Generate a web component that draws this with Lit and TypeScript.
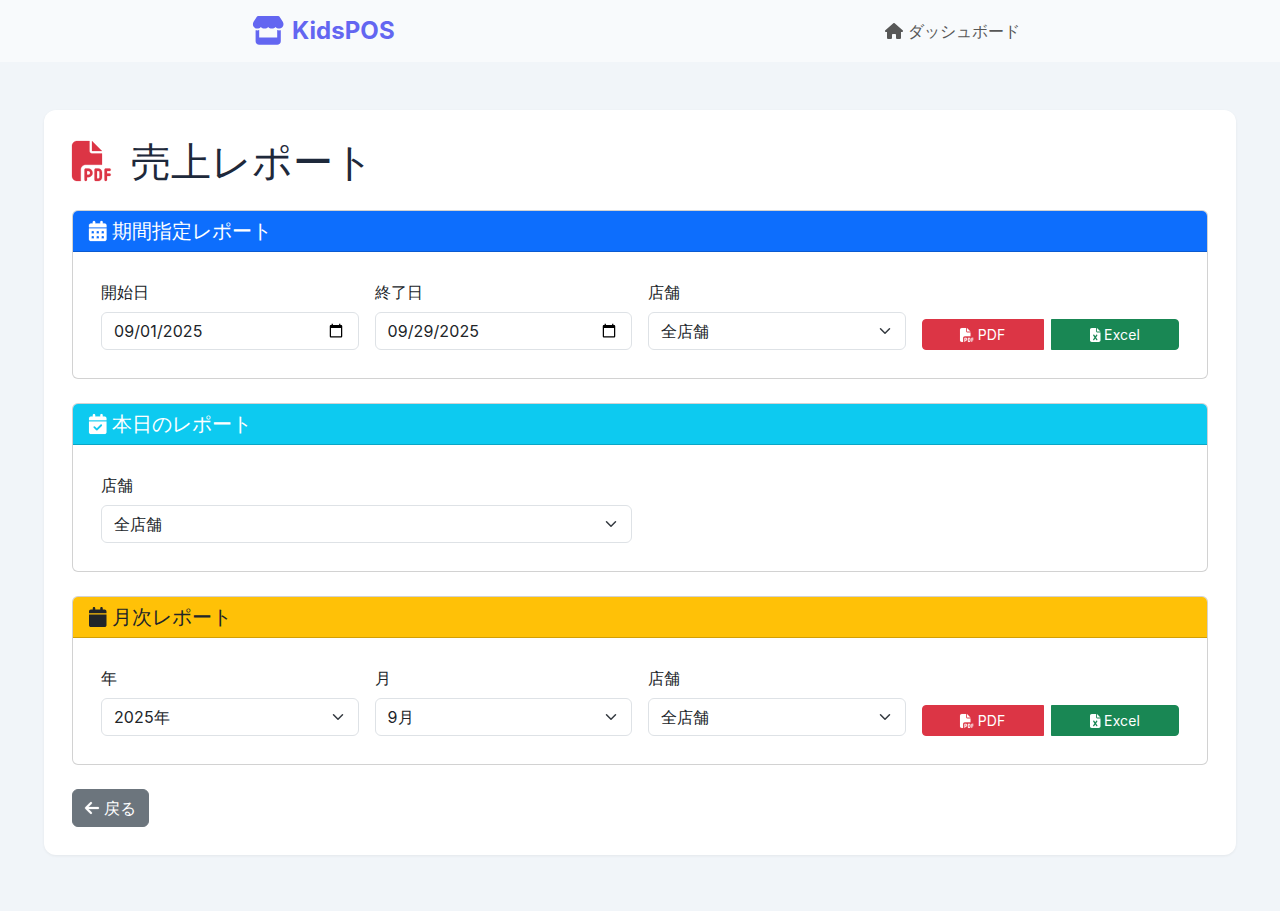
import { LitElement, html, css, svg } from "lit";
import { customElement, property } from "lit/decorators.js";

type Icon = { w: number; d: string; bold?: number };

const calendarTop =
  "M128 0c17.7 0 32 14.3 32 32V64H288V32c0-17.7 14.3-32 32-32s32 14.3 32 32V64h48c26.5 0 48 21.5 48 48v48H0V112C0 85.5 21.5 64 48 64H96V32c0-17.7 14.3-32 32-32zM0 192H448V464c0 26.5-21.5 48-48 48H48c-26.5 0-48-21.5-48-48V192z";

const icons: Record<string, Icon> = {
  store: {
    w: 576,
    d: "M547.6 103.8L490.3 13.1C485.2 5 476.1 0 466.4 0H109.6C99.9 0 90.8 5 85.7 13.1L28.3 103.8c-29.6 46.8-3.4 111.9 51.9 119.4c4 .5 8.1 .8 12.1 .8c26.1 0 49.3-11.4 65.2-29c15.9 17.6 39.1 29 65.2 29c26.1 0 49.3-11.4 65.2-29c15.9 17.6 39.1 29 65.2 29c26.2 0 49.3-11.4 65.2-29c16 17.6 39.1 29 65.2 29c4.1 0 8.1-.3 12.1-.8c55.5-7.4 81.8-72.5 52.1-119.4zM499.7 254.9l-.1 0c-5.3 .7-10.7 1.1-16.2 1.1c-12.4 0-24.3-1.9-35.4-5.3V384H128V250.6c-11.2 3.5-23.2 5.4-35.6 5.4c-5.5 0-11-.4-16.3-1.1l-.1 0c-4.1-.6-8.1-1.3-12-2.3V384v64c0 35.3 28.7 64 64 64H448c35.3 0 64-28.7 64-64V384 252.6c-4 1-8 1.8-12.3 2.3z",
  },
  home: {
    w: 576,
    d: "M575.8 255.5c0 18-15 32.1-32 32.1h-32l.7 160.2c0 2.7-.2 5.4-.5 8.1V472c0 22.1-17.9 40-40 40H456c-1.1 0-2.2 0-3.3-.1c-1.4 .1-2.8 .1-4.2 .1H416 392c-22.1 0-40-17.9-40-40V448 384c0-17.7-14.3-32-32-32H256c-17.7 0-32 14.3-32 32v64 24c0 22.1-17.9 40-40 40H160 128.1c-1.5 0-3-.1-4.5-.2c-1.2 .1-2.4 .2-3.6 .2H104c-22.1 0-40-17.9-40-40V360c0-.9 0-1.9 .1-2.8V287.6H32c-18 0-32-14-32-32.1c0-9 3-17 10-24L266.4 8c7-7 15-8 22-8s15 2 21 7L564.8 231.5c8 7 12 15 11 24z",
  },
  calendar: { w: 448, d: calendarTop },
  calendarDays: {
    w: 448,
    bold: 7,
    d:
      calendarTop +
      "m64 80v32c0 8.8 7.2 16 16 16h32c8.8 0 16-7.2 16-16V272c0-8.8-7.2-16-16-16H80c-8.8 0-16 7.2-16 16zm128 0v32c0 8.8 7.2 16 16 16h32c8.8 0 16-7.2 16-16V272c0-8.8-7.2-16-16-16H208c-8.8 0-16 7.2-16 16zm144-16c-8.8 0-16 7.2-16 16v32c0 8.8 7.2 16 16 16h32c8.8 0 16-7.2 16-16V272c0-8.8-7.2-16-16-16H336zM64 400v32c0 8.8 7.2 16 16 16h32c8.8 0 16-7.2 16-16V400c0-8.8-7.2-16-16-16H80c-8.8 0-16 7.2-16 16zm144-16c-8.8 0-16 7.2-16 16v32c0 8.8 7.2 16 16 16h32c8.8 0 16-7.2 16-16V400c0-8.8-7.2-16-16-16H208zm112 16v32c0 8.8 7.2 16 16 16h32c8.8 0 16-7.2 16-16V400c0-8.8-7.2-16-16-16H336c-8.8 0-16 7.2-16 16z",
  },
  calendarCheck: {
    w: 448,
    bold: 3,
    d:
      calendarTop +
      "M329 305c9.4-9.4 9.4-24.6 0-33.9s-24.6-9.4-33.9 0l-95 95-47-47c-9.4-9.4-24.6-9.4-33.9 0s-9.4 24.6 0 33.9l64 64c9.4 9.4 24.6 9.4 33.9 0L329 305z",
  },
  filePdf: {
    w: 512,
    bold: 3,
    d: "M0 64C0 28.7 28.7 0 64 0H224V128c0 17.7 14.3 32 32 32H384V304H176c-35.3 0-64 28.7-64 64V512H64c-35.3 0-64-28.7-64-64V64zm384 64H256V0L384 128zM176 352h32c30.9 0 56 25.1 56 56s-25.1 56-56 56H192v32c0 8.8-7.2 16-16 16s-16-7.2-16-16V448 368c0-8.8 7.2-16 16-16zm32 80c13.3 0 24-10.7 24-24s-10.7-24-24-24H192v48h16zm96-80h32c26.5 0 48 21.5 48 48v64c0 26.5-21.5 48-48 48H304c-8.8 0-16-7.2-16-16V368c0-8.8 7.2-16 16-16zm32 128c8.8 0 16-7.2 16-16V400c0-8.8-7.2-16-16-16H320v96h16zm80-112c0-8.8 7.2-16 16-16h48c8.8 0 16 7.2 16 16s-7.2 16-16 16H448v32h32c8.8 0 16 7.2 16 16s-7.2 16-16 16H448v48c0 8.8-7.2 16-16 16s-16-7.2-16-16V432 368z",
  },
  fileExcel: {
    w: 384,
    d: "M64 0C28.7 0 0 28.7 0 64V448c0 35.3 28.7 64 64 64H320c35.3 0 64-28.7 64-64V160H256c-17.7 0-32-14.3-32-32V0H64zM256 0V128H384L256 0zM155.7 250.2L192 302.1l36.3-51.9c7.6-10.9 22.6-13.5 33.4-5.9s13.5 22.6 5.9 33.4L221.3 344l46.4 66.2c7.6 10.9 5 25.8-5.9 33.4s-25.8 5-33.4-5.9L192 385.8l-36.3 51.9c-7.6 10.9-22.6 13.5-33.4 5.9s-13.5-22.6-5.9-33.4L162.7 344l-46.4-66.2c-7.6-10.9-5-25.8 5.9-33.4s25.8-5 33.4 5.9z",
  },
  arrowLeft: {
    w: 448,
    bold: 8,
    d: "M9.4 233.4c-12.5 12.5-12.5 32.8 0 45.3l160 160c12.5 12.5 32.8 12.5 45.3 0s12.5-32.8 0-45.3L109.2 288 416 288c17.7 0 32-14.3 32-32s-14.3-32-32-32l-306.7 0L214.6 118.6c12.5-12.5 12.5-32.8 0-45.3s-32.8-12.5-45.3 0l-160 160z",
  },
};

const icon = (name: string) => {
  const { w, d, bold = 0 } = icons[name];
  return html`<svg class="icon" viewBox="0 0 ${w} 512" aria-hidden="true">
    ${svg`<path fill="currentColor" stroke="currentColor" stroke-width=${bold} fill-rule="evenodd" d=${d}></path>`}
  </svg>`;
};

const shared = css`
  *,
  *::before,
  *::after {
    box-sizing: border-box;
  }
  .icon {
    height: 1em;
    width: auto;
    display: inline-block;
    vertical-align: -0.125em;
    overflow: visible;
  }
`;

@customElement("report-card")
class ReportCard extends LitElement {
  @property() heading = "";
  @property() symbol = "calendar";
  @property() tone = "primary";

  static styles = [
    shared,
    css`
      :host {
        display: block;
        margin-bottom: 24px;
      }
      .card {
        border: 1px solid rgba(0, 0, 0, 0.175);
        border-radius: 6px;
        background: #fff;
      }
      .head {
        padding: 8px 16px;
        border-bottom: 1px solid rgba(0, 0, 0, 0.175);
        border-radius: 5px 5px 0 0;
        color: #fff;
      }
      .primary {
        background: #0d6efd;
      }
      .info {
        background: #0dcaf0;
      }
      .warning {
        background: #ffc107;
        color: #212529;
      }
      .title {
        margin: 0;
        height: 24px;
        font-size: 20px;
        font-weight: 500;
        line-height: 24px;
      }
      .body {
        padding: 28px;
        display: grid;
        grid-template-columns: repeat(4, minmax(0, 1fr));
        column-gap: 16px;
        align-items: end;
      }
    `,
  ];

  render() {
    return html`<section class="card">
      <div class="head ${this.tone}">
        <h5 class="title">${icon(this.symbol)} ${this.heading}</h5>
      </div>
      <div class="body"><slot></slot></div>
    </section>`;
  }
}

@customElement("form-field")
class FormField extends LitElement {
  @property() label = "";
  @property() value = "";
  @property() kind = "select";

  static styles = [
    shared,
    css`
      :host {
        display: block;
      }
      .label {
        display: block;
        height: 24px;
        margin-bottom: 8px;
      }
      .control {
        display: block;
        width: 100%;
        height: 38px;
        margin: 0;
        padding: 6px 12px;
        font: inherit;
        line-height: 24px;
        letter-spacing: 0.1px;
        color: #212529;
        background-color: #fff;
        border: 1px solid #dee2e6;
        border-radius: 6px;
        appearance: none;
        outline: none;
      }
      .control::-webkit-date-and-time-value {
        height: 24px;
      }
      .control::-webkit-datetime-edit {
        display: block;
        padding: 0;
      }
      .control::-webkit-datetime-edit-fields-wrapper,
      .control::-webkit-datetime-edit-text,
      .control::-webkit-datetime-edit-month-field,
      .control::-webkit-datetime-edit-day-field,
      .control::-webkit-datetime-edit-year-field {
        padding: 0;
      }
      .wrap {
        display: grid;
        align-items: center;
      }
      .wrap > * {
        grid-area: 1 / 1;
      }
      .chevron {
        justify-self: end;
        margin-right: 13px;
        width: 16px;
        height: 12px;
        pointer-events: none;
      }
    `,
  ];

  render() {
    return html`<label>
      <span class="label">${this.label}</span>
      ${this.kind === "date"
        ? html`<input class="control" type="date" .value=${this.value} />`
        : html`<span class="wrap">
            <select class="control">
              <option>${this.value}</option>
            </select>
            <svg class="chevron" viewBox="0 0 16 16" aria-hidden="true">
              <path
                fill="none"
                stroke="#343a40"
                stroke-linecap="round"
                stroke-linejoin="round"
                stroke-width="2"
                d="m2 5 6 6 6-6"
              />
            </svg>
          </span>`}
    </label>`;
  }
}

@customElement("export-buttons")
class ExportButtons extends LitElement {
  static styles = [
    shared,
    css`
      :host {
        display: flex;
        gap: 7px;
      }
      .btn {
        flex: 1 1 auto;
        height: 31px;
        margin: 0;
        padding: 4px 8px;
        border: 1px solid transparent;
        font: inherit;
        font-size: 14px;
        line-height: 21px;
        letter-spacing: 0.1px;
        color: #fff;
        text-align: center;
      }
      .pdf {
        flex: 0 0 122px;
        background: #dc3545;
        border-color: #dc3545;
        border-radius: 4px 0 0 4px;
      }
      .excel {
        background: #198754;
        border-color: #198754;
        border-radius: 0 4px 4px 0;
      }
    `,
  ];

  render() {
    return html`<button class="btn pdf">${icon("filePdf")} PDF</button
      ><button class="btn excel">${icon("fileExcel")} Excel</button>`;
  }
}

@customElement("app-root")
class AppRoot extends LitElement {
  static styles = [
    shared,
    css`
      :host {
        display: block;
        min-height: 911px;
        background: #f1f5f9;
        font-family: Inter, sans-serif;
        font-size: 16px;
        line-height: 1.5;
        color: #212529;
      }
      .nav {
        height: 62px;
        background: #f8fafc;
        display: flex;
        justify-content: space-between;
        align-items: center;
        padding: 0 260px 0 252px;
      }
      .brand {
        color: #6366f1;
        font-size: 24px;
        font-weight: 700;
        line-height: 36px;
        letter-spacing: 0.08px;
        display: flex;
        align-items: center;
        gap: 7.5px;
      }
      .brand .icon {
        font-size: 28.8px;
        margin-bottom: 2px;
      }
      .link {
        color: #575757;
      }
      .link .icon {
        margin-right: 0.5px;
      }
      .panel {
        margin: 48px 44px 0;
        padding: 28px;
        height: 745px;
        background: #fff;
        border-radius: 12px;
        box-shadow: 0 1px 3px rgba(0, 0, 0, 0.06);
      }
      .title {
        margin: 0 0 24px;
        height: 48px;
        font-size: 40px;
        font-weight: 500;
        line-height: 48px;
        color: #1e293b;
      }
      .title .icon {
        color: #dc3545;
        margin-right: 8px;
      }
      .wide {
        grid-column: span 2;
      }
      .back {
        display: inline-block;
        height: 38px;
        padding: 6px 12px;
        border: 1px solid #6c757d;
        border-radius: 6px;
        background: #6c757d;
        color: #fff;
        font: inherit;
        line-height: 24px;
      }
    `,
  ];

  render() {
    return html`
      <nav class="nav">
        <div class="brand">${icon("store")}<span>KidsPOS</span></div>
        <div class="link">${icon("home")} ダッシュボード</div>
      </nav>
      <main class="panel">
        <h1 class="title">${icon("filePdf")} 売上レポート</h1>
        <report-card heading="期間指定レポート" symbol="calendarDays" tone="primary">
          <form-field label="開始日" kind="date" value="2025-09-01"></form-field>
          <form-field label="終了日" kind="date" value="2025-09-29"></form-field>
          <form-field label="店舗" value="全店舗"></form-field>
          <export-buttons></export-buttons>
        </report-card>
        <report-card heading="本日のレポート" symbol="calendarCheck" tone="info">
          <form-field class="wide" label="店舗" value="全店舗"></form-field>
        </report-card>
        <report-card heading="月次レポート" symbol="calendar" tone="warning">
          <form-field label="年" value="2025年"></form-field>
          <form-field label="月" value="9月"></form-field>
          <form-field label="店舗" value="全店舗"></form-field>
          <export-buttons></export-buttons>
        </report-card>
        <button class="back">${icon("arrowLeft")} 戻る</button>
      </main>
    `;
  }
}
